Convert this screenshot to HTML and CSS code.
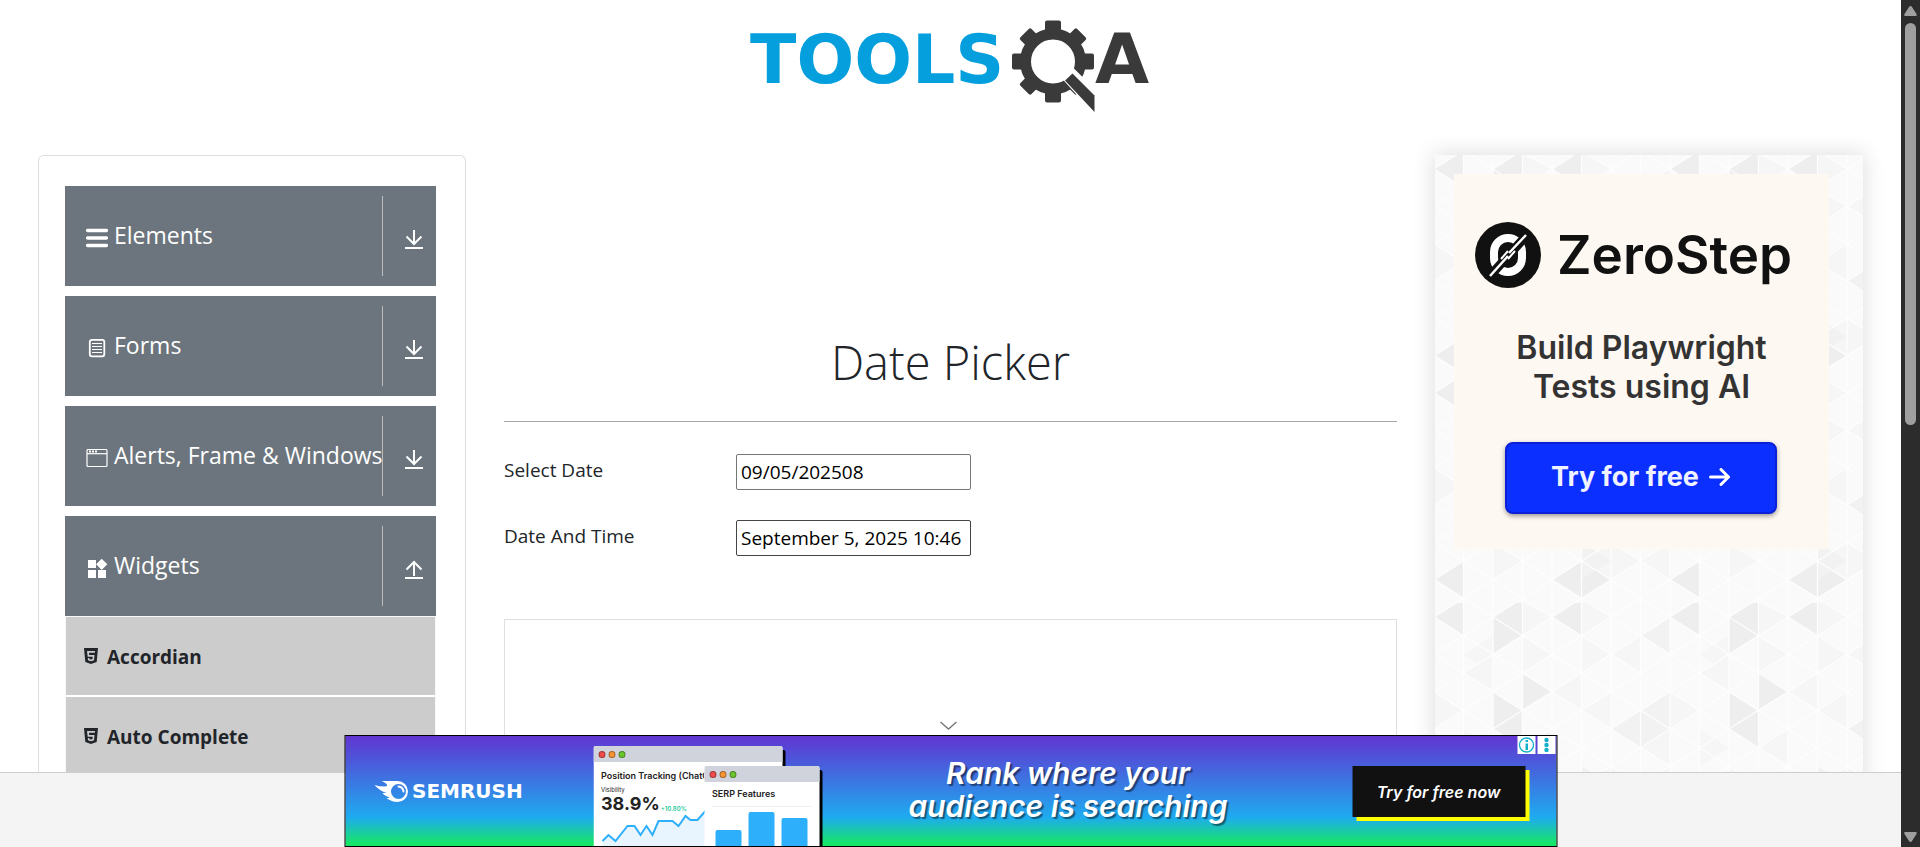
FILE: index.html
```html
<!DOCTYPE html>
<html lang="en">
<head>
<meta charset="utf-8">
<title>Date Picker</title>
<link rel="stylesheet" href="styles.css">
</head>
<body>
<svg class="defs" width="0" height="0" aria-hidden="true">
  <symbol id="down" viewBox="0 0 20 20"><path d="M10 0v14M2.500 6.500 10 14l7.500-7.500" fill="none" stroke="#fff" stroke-width="2"/><path d="M1 17h18v2H1z" fill="#fff"/></symbol>
  <symbol id="up" viewBox="0 0 20 20"><path d="M10 16V2M2.500 9.500 10 2l7.500 7.500" fill="none" stroke="#fff" stroke-width="2"/><path d="M1 17h18v2H1z" fill="#fff"/></symbol>
  <symbol id="shield" viewBox="0 0 16 16"><path fill="#212529" fill-rule="evenodd" d="M1 0h14l-1.300 14L8 16l-5.700-2zM4 3l.7 5.800h5l-.2 2.300L8 11.600l-1.600-.5-.1-1H4.800l.2 2.200 3 .9 3-.9.5-5.200H6.100L6 4.800h5.800L12 3z"/></symbol>
</svg>
<div class="window">
  <div class="page">
    <header class="header">
      <a class="brand" href="#" aria-label="TOOLSQA">
        <svg width="400" height="100" viewBox="0 0 400 100">
          <text class="brand-tools" x="-1" y="67">TOOLS</text>
          <text class="brand-a" x="344" y="67">A</text>
          <g transform="translate(302 45.500)" fill="#3a3a3b">
            <g id="teeth">
              <path d="M-8-30v-9q0-2 2-2H6q2 0 2 2v9zM-8 30v9q0 2 2 2H6q2 0 2-2v-9z"/>
              <path d="M-30-8h-9q-2 0-2 2V6q0 2 2 2h9zM30-8h9q2 0 2 2V6q0 2-2 2h-9z"/>
            </g>
            <use href="#teeth" transform="rotate(45) scale(.98)"/>
            <circle r="27.500" fill="none" stroke="#3a3a3b" stroke-width="11"/>
            <path d="M8 16 20 6 46 32 46 58z" fill="#fff"/>
            <path d="M12 19 19.500 12 41.500 34v16.500z"/>
          </g>
        </svg>
      </a>
    </header>

    <div class="columns">
      <nav class="sidebar">
        <button class="group" type="button">
          <svg class="group-icon" width="22" height="22" viewBox="0 0 22 22"><path d="M1.500 3.500h19M1.500 11h19M1.500 18.500h19" stroke="#fff" stroke-width="3.300" stroke-linecap="round"/></svg>
          <span class="group-name">Elements</span>
          <span class="group-toggle"><svg width="20" height="20"><use href="#down"/></svg></span>
        </button>
        <button class="group" type="button">
          <svg class="group-icon" width="22" height="22" viewBox="0 0 22 22"><rect x="3.800" y="2.800" width="14.500" height="16.500" rx="2" fill="none" stroke="#fff" stroke-width="1.800"/><path d="M6 6.500h10M6 9.500h10M6 12.500h10M6 15.500h10" stroke="#fff" stroke-width="1.200"/></svg>
          <span class="group-name">Forms</span>
          <span class="group-toggle"><svg width="20" height="20"><use href="#down"/></svg></span>
        </button>
        <button class="group" type="button">
          <svg class="group-icon" width="22" height="22" viewBox="0 0 22 22"><rect x="1" y="2.500" width="20" height="17" rx="1" fill="none" stroke="#fff" stroke-width="1.200"/><path d="M1 6.700h20" stroke="#fff" stroke-width="1.200"/><path d="M3 4.500h8" stroke="#fff" stroke-width="2" stroke-dasharray="2 1"/></svg>
          <span class="group-name">Alerts, Frame &amp; Windows</span>
          <span class="group-toggle"><svg width="20" height="20"><use href="#down"/></svg></span>
        </button>
        <button class="group" type="button" aria-expanded="true">
          <svg class="group-icon" width="22" height="22" viewBox="0 0 22 22"><path fill="#fff" d="M2 3h8v8H2zM2 13h8v8H2zM12 13h8v8h-8zM15.700 1.700l5.600 5.600-5.600 5.600-5.600-5.600z"/></svg>
          <span class="group-name">Widgets</span>
          <span class="group-toggle"><svg width="20" height="20"><use href="#up"/></svg></span>
        </button>
        <ul class="menu">
          <li><a class="menu-item" href="#"><svg width="16" height="16"><use href="#shield"/></svg>Accordian</a></li>
          <li><a class="menu-item" href="#"><svg width="16" height="16"><use href="#shield"/></svg>Auto Complete</a></li>
        </ul>
      </nav>

      <main class="main">
        <h1 class="title">Date Picker</h1>
        <form class="form">
          <label for="date">Select Date</label>
          <input class="field" id="date" type="text" value="09/05/202508">
          <label for="datetime">Date And Time</label>
          <input class="field field-active" id="datetime" type="text" value="September 5, 2025 10:46 AM">
        </form>
        <div class="slot"></div>
      </main>

      <aside class="promo">
        <svg class="promo-pattern" width="100%" height="100%" aria-hidden="true">
          <defs>
            <pattern id="tri" width="236" height="224" patternUnits="userSpaceOnUse" patternTransform="translate(-1 0)">
              <rect width="236" height="224" fill="#fafafa"/>
              <g id="light" fill="#f6f6f6">
                <path d="M29.500 51.300 59 32.700V70zM88.500 32.700 118 51.300 88.500 70zM177 51.300l29.500-18.600V70zM147.500 107.300 177 88.700V126zM29.500 126 59 144.700 29.500 163.300zM88.500 144.700 118 126v37.300zM177 163.300l29.500 18.700-29.500 18.700zM0 88.700l29.500 18.600L0 126zM206.500 182 236 163.300v37.400z"/>
                <path d="M59 88.700V51.300L29.500 70zM118 88.700l29.500-18.700v37.300zM59 163.300 88.500 182 59 200.700zM147.500 182 177 163.300v37.400zM177 51.300 147.500 32.700V70zM206.500 144.700 236 126v37.300zM88.500 0v32.700L118 14zM147.500-4.700 177 14l-29.500 18.700z"/>
              </g>
              <g fill="#eee">
                <path d="M0 200.700 29.500 182v37.300zM118 200.700l29.500-18.700v37.300zM147.500 182 177 200.700l-29.500 18.600zM0 14 29.500-4.700v37.400zM59 14 88.500-4.700v37.400zM118 14l29.500-18.700v37.400zM59 14 88.500 32.700 59 51.300zM88.500 70 118 88.700l-29.500 18.600zM59 88.700l29.500 18.600L59 126zM59 126l29.500-18.700v37.400z"/>
                <path fill="#f2f2f2" d="M206.500 32.700 236 14v37.300zM177 126l29.500-18.700v37.400zM206.500 107.300 236 88.700V126zM147.500 163.300 177 182l-29.500 18.700zM206.500 107.300l29.500 18.700-29.500 18.700z"/>
              </g>
              <g stroke="#fefefe" stroke-width="1.300" fill="none">
                <path d="M0 0v224M29.500 0v224M59 0v224M88.500 0v224M118 0v224M147.500 0v224M177 0v224M206.500 0v224M236 0v224"/>
                <g id="rows">
                  <path id="z" d="M0 14 29.500 32.700 59 14 88.500 32.700 118 14l29.500 18.700L177 14l29.500 18.700L236 14M0 14 29.500-4.700 59 14 88.500-4.700 118 14l29.500-18.700L177 14l29.500-18.700L236 14"/>
                  <use href="#z" y="37.330"/><use href="#z" y="74.670"/>
                </g>
                <use href="#rows" y="112"/><use href="#z" y="224"/>
              </g>
            </pattern>
          </defs>
          <rect width="100%" height="100%" fill="url(#tri)"/>
        </svg>
        <div class="zero">
          <div class="zero-brand">
            <svg width="66" height="66" viewBox="0 0 66 66"><circle cx="33" cy="33" r="33" fill="#111"/><rect x="19" y="16" width="28" height="34" rx="14" fill="none" stroke="#fff" stroke-width="8"/><path d="M14 55 52 13" stroke="#111" stroke-width="9"/><path d="M15 54 33 34M34 31 51 13" stroke="#fff" stroke-width="2.500"/><path d="m26 37 7-8M33 37l7-8" stroke="#fff" stroke-width="2"/></svg>
            <span>ZeroStep</span>
          </div>
          <p class="zero-text">Build Playwright<br>Tests using AI</p>
          <a class="zero-button" href="#">Try for free
            <svg width="22" height="18" viewBox="0 0 22 18"><path d="M1.500 9h18M12 1.500 19.500 9 12 16.500" fill="none" stroke="#fff" stroke-width="3" stroke-linecap="round" stroke-linejoin="round"/></svg>
          </a>
        </div>
      </aside>
    </div>

    <footer class="footer"></footer>

    <section class="banner" aria-label="Advertisement">
      <button class="collapse" type="button" aria-label="Hide">
        <svg width="18" height="10" viewBox="0 0 18 10"><path d="M1 1l8 7 8-7" fill="none" stroke="#777" stroke-width="1.400"/></svg>
      </button>
      <div class="semrush">
        <svg width="34" height="21" viewBox="0 0 34 21"><path fill="#fff" fill-rule="evenodd" d="M7 0h16a10.500 10.500 0 0 1 0 21q-6 0-11-4 2 0 3-.6-5-1.400-7-4.400h4Q4 9 0 4q5 1.500 10 1.500Q14 5 12 3 10 1 7 0zM24 3a7.500 7.500 0 1 0 0 15 7.500 7.500 0 0 0 0-15z"/><path d="M24 5.500q4.500.5 5 5" fill="none" stroke="#fff" stroke-width="2" stroke-linecap="round"/></svg>
        <span>SEMRUSH</span>
      </div>
      <div class="shots">
        <div class="shot shot-main">
          <div class="shot-bar"><i class="dot red"></i><i class="dot orange"></i><i class="dot green"></i></div>
          <div class="shot-body">
            <b class="shot-title">Position Tracking (ChatG</b>
            <span class="shot-small">Visibility</span>
            <div class="shot-figure"><b>38.9%</b><span>+10.80%</span></div>
          </div>
          <svg class="shot-line" width="104" height="36" viewBox="0 0 104 36"><path d="M1 31 7 25l7 6 12-15h7l6 9 6-9 6 9 6-14h14l6 5 7-10 5 4h7L104 1v35H1z" fill="#e9f5fe"/><path d="M1 31 7 25l7 6 12-15h7l6 9 6-9 6 9 6-14h14l6 5 7-10 5 4h7L104 1" fill="none" stroke="#2eaffc" stroke-width="2"/></svg>
        </div>
        <div class="shot shot-serp">
          <div class="shot-bar"><i class="dot red"></i><i class="dot orange"></i><i class="dot green"></i></div>
          <b class="shot-title serp-title">SERP Features</b>
          <div class="bars"><i class="bar bar-low"></i><i class="bar bar-high"></i><i class="bar bar-mid"></i></div>
        </div>
      </div>
      <p class="slogan">Rank where your<br>audience is searching</p>
      <a class="try" href="#">Try for free now</a>
      <div class="ad-tools">
        <button type="button" aria-label="Ad information"><svg width="18" height="18" viewBox="0 0 18 18"><circle cx="9" cy="9" r="7" fill="none" stroke="#14aecb" stroke-width="1.300"/><path d="M8 4h2.500v2H8zM8 7.500h2.500V14H8z" fill="#14aecb"/></svg></button>
        <button type="button" aria-label="Ad options"><svg width="18" height="18" viewBox="0 0 18 18"><g fill="#14aecb"><circle cx="9" cy="4" r="2.200"/><circle cx="9" cy="9" r="2.200"/><circle cx="9" cy="14" r="2.200"/></g></svg></button>
      </div>
    </section>
  </div>

  <div class="scrollbar" aria-hidden="true">
    <svg width="13" height="11" viewBox="0 0 13 11"><path d="M6.500 0q1 0 1.500 1l4.500 7q1 2-1 2h-10q-2 0-1-2L5 1q.5-1 1.500-1z" fill="#9f9f9f"/></svg>
    <div class="track"><div class="thumb"></div></div>
    <svg width="13" height="11" viewBox="0 0 13 11"><path d="M6.500 10q-1 0-1.500-1L.5 2q-1-2 1-2h10q2 0 1 2L8 9q-.5 1-1.500 1z" fill="#9f9f9f"/></svg>
  </div>
</div>
</body>
</html>
```

FILE: styles.css
```css
* { box-sizing: border-box; }

body {
  margin: 0;
  background: #fff;
  color: #212529;
  font-family: "Open Sans", "Noto Sans", sans-serif;
  font-size: 19px;
}

button, input { font: inherit; }
a { color: inherit; text-decoration: none; }
svg { display: block; flex: none; }
.defs { position: absolute; }

.window { display: flex; height: 100vh; }

.page {
  position: relative;
  flex: 1;
  min-width: 0;
  display: flex;
  flex-direction: column;
  overflow: hidden;
}

/* Header */
.header {
  flex: none;
  display: flex;
  justify-content: center;
  height: 155px;
  padding-top: 16px;
}
.brand svg { overflow: visible; }
.brand-tools, .brand-a {
  font-family: "DejaVu Sans", sans-serif;
  font-weight: 700;
  font-size: 68px;
  fill: #059fdd;
}
.brand-a { fill: #3a3a3b; font-size: 70px; }

/* Columns */
.columns {
  flex: 1;
  min-height: 0;
  display: grid;
  grid-template-columns: 428fr 893fr 428fr;
  gap: 38px;
  padding: 0 38px;
}

/* Sidebar */
.sidebar {
  min-width: 0;
  padding: 30px 29px 0 26px;
  border: 1px solid #dcdddd;
  border-bottom: 0;
  border-radius: 6px 6px 0 0;
}
.group {
  display: flex;
  align-items: center;
  width: 100%;
  height: 100px;
  margin: 0 0 10px;
  padding: 0 0 0 21px;
  border: 0;
  background: #6c757d;
  color: #fff;
  font-size: 23px;
  text-align: left;
}
.group[aria-expanded] { margin-bottom: 0; }
.group-icon { margin: 4px 6px 0 0; }
.group-name { flex: 1; min-width: 0; padding-bottom: 2px; white-space: nowrap; }
.group-toggle {
  flex: none;
  display: flex;
  align-items: center;
  justify-content: center;
  width: 54px;
  height: 80px;
  padding: 8px 0 0 9px;
  border-left: 1px solid #bcbcbc;
}
.menu { margin: 0; padding: 0; list-style: none; border: 1px solid #f8f8f8; }
.menu-item {
  display: flex;
  align-items: center;
  gap: 8px;
  height: 78px;
  margin-bottom: 2px;
  padding: 2px 0 0 17px;
  background: #ccc;
  font-weight: 700;
}
.menu-item svg { margin-bottom: 2px; }

/* Date form */
.main { min-width: 0; }
.title {
  margin: 172px 0 0;
  padding-bottom: 24px;
  border-bottom: 1px solid #a6a8a9;
  font-size: 47px;
  font-weight: 300;
  line-height: 70px;
  text-align: center;
}
.form {
  display: grid;
  grid-template-columns: 232px 235px;
  row-gap: 30px;
  margin: 32px 0 63px;
}
.form label { line-height: 32px; }
.field {
  width: 100%;
  height: 36px;
  padding: 0 4px;
  border: 1px solid #767676;
  border-radius: 2px;
  background: #fff;
  color: #000;
}
.field-active { border-color: #444; }
.slot { height: 300px; border: 1px solid #dfdfdf; }

/* Right-hand promo */
.promo {
  position: relative;
  min-width: 0;
  padding: 19px;
  box-shadow: 0 0 20px 2px #e0e0e0;
}
.promo-pattern { position: absolute; inset: 0; }
.zero {
  position: relative;
  max-width: 375px;
  height: 375px;
  padding-top: 48px;
  background: #fef8f2;
  color: #111;
  font-family: Inter, sans-serif;
}
.zero-brand {
  display: flex;
  align-items: center;
  gap: 16px;
  padding-left: 21px;
  font-size: 53px;
  font-weight: 600;
  line-height: 66px;
}
.zero-text {
  margin: 40px 0 0;
  color: #333;
  font-size: 32px;
  font-weight: 600;
  line-height: 39px;
  text-align: center;
}
.zero-button {
  display: flex;
  align-items: center;
  justify-content: center;
  gap: 10px;
  width: 272px;
  height: 72px;
  margin: 36px 0 0 51px;
  padding-bottom: 3px;
  border: 2px solid #0a1fd8;
  border-radius: 8px;
  background: #0a2fff;
  box-shadow: 0 2px 5px #0006;
  color: #f0f2ff;
  font-size: 27px;
  font-weight: 700;
}

/* Footer */
.footer {
  position: relative;
  flex: none;
  height: 75px;
  border-top: 1px solid #ccc;
  background: #f4f4f4;
}

/* Banner over the page foot */
.banner {
  position: absolute;
  bottom: 0;
  left: 50%;
  transform: translateX(-50%);
  display: flex;
  width: 1213px;
  max-width: 100%;
  height: 112px;
  padding-left: 29px;
  border: 1px solid #000;
  background: linear-gradient(#6135d2, #4a5cdb 25%, #1eabf0 74%, #16e666 98%);
  color: #fff;
  font-family: Inter, sans-serif;
}
.collapse {
  position: absolute;
  top: -19px;
  left: 590px;
  padding: 4px;
  border: 0;
  background: none;
}
.semrush {
  flex: none;
  display: flex;
  align-items: center;
  gap: 4px;
  width: 219px;
  font-family: "DejaVu Sans", sans-serif;
  font-size: 20px;
  font-weight: 700;
}
.shots {
  flex: none;
  position: relative;
  width: 230px;
  overflow: hidden;
  color: #222;
}
.shot { position: absolute; background: #fff; border-radius: 2px 2px 0 0; box-shadow: 3px 4px #000; }
.shot-main { top: 10px; left: 0; width: 189px; height: 110px; }
.shot-serp { top: 30px; left: 111px; width: 115px; height: 90px; }
.shot-bar {
  display: flex;
  align-items: center;
  gap: 3px;
  height: 16px;
  padding-left: 5px;
  border-radius: 2px 2px 0 0;
  background: #d1d3dc;
}
.dot { width: 7px; height: 7px; border: 1px solid #0005; border-radius: 50%; }
.red { background: #f14b4b; }
.orange { background: #f79433; }
.green { background: #6cc52c; }
.shot-body { display: flex; flex-direction: column; width: 111px; padding: 8px 0 0 8px; overflow: hidden; }
.shot-title { font-size: 9px; font-weight: 600; line-height: 12px; white-space: nowrap; }
.shot-small { margin-top: 4px; font-size: 6px; line-height: 8px; }
.shot-figure { display: flex; align-items: flex-end; gap: 1px; font-size: 18px; line-height: 20px; }
.shot-figure span { color: #25c99a; font-size: 6px; font-weight: 600; line-height: 10px; }
.shot-line { position: absolute; top: 64px; left: 8px; }
.serp-title { display: block; padding: 6px 8px; }
.bars {
  display: flex;
  align-items: flex-end;
  gap: 7px;
  height: 44px;
  margin: 0 8px;
  padding: 0 3px;
  border-top: 1px solid #eee;
}
.bar { flex: 1; border-radius: 2px 2px 0 0; background: #2eaffc; }
.bar-low { height: 20px; }
.bar-high { height: 38px; }
.bar-mid { height: 32px; }
.slogan {
  flex: 1;
  margin: 0;
  padding-top: 21px;
  font-size: 30px;
  font-style: italic;
  font-weight: 600;
  line-height: 33px;
  text-align: center;
  text-shadow: 2px 2px 1px #0007;
}
.try {
  flex: none;
  display: flex;
  align-items: center;
  justify-content: center;
  width: 173px;
  height: 51px;
  margin: 30px 31px 0 39px;
  background: #111;
  box-shadow: 4px 4px #ff0;
  font-size: 16px;
  font-style: italic;
  font-weight: 600;
}
.ad-tools { position: absolute; top: 0; right: 1px; display: flex; gap: 2px; }
.ad-tools button { padding: 0; border: 0; background: #fff; }

/* Window scrollbar */
.scrollbar {
  flex: none;
  display: flex;
  flex-direction: column;
  align-items: center;
  gap: 6px;
  width: 19px;
  padding: 6px 0 4px;
  background: #2c2c2c;
}
.track { flex: 1; width: 11px; }
.thumb { height: 50%; border-radius: 6px; background: #9f9f9f; }
```
